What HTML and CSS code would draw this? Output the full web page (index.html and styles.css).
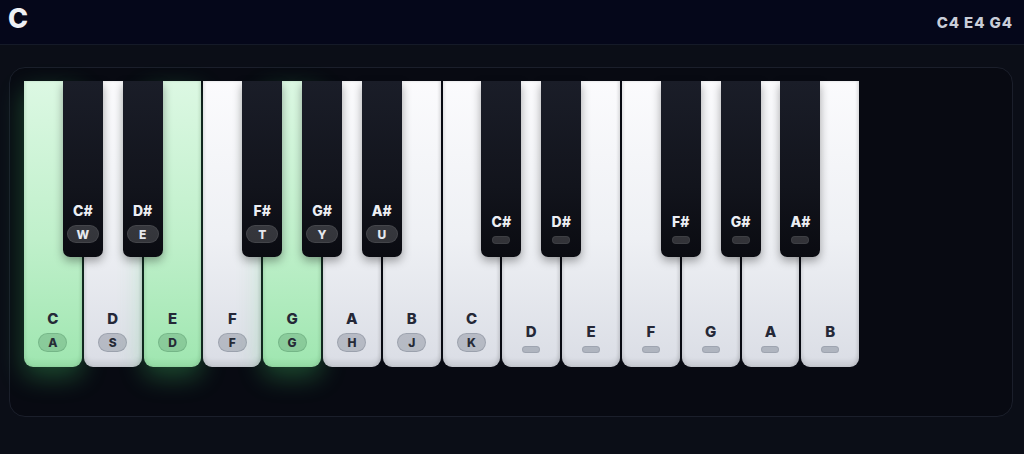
FILE: index.html
```html
<!DOCTYPE html>
<html lang="en">
<head>
<meta charset="utf-8">
<title>Piano</title>
<link rel="stylesheet" href="styles.css">
</head>
<body>
<header class="topbar">
  <h1 class="chord">C</h1>
  <div class="notes">C4 E4 G4</div>
</header>
<main class="stage">
  <section class="panel">
    <div class="keyboard">
      <div class="white active"><span class="name">C</span><span class="kbd">A</span>
        <div class="black"><span class="name">C#</span><span class="kbd">W</span></div></div>
      <div class="white"><span class="name">D</span><span class="kbd">S</span>
        <div class="black"><span class="name">D#</span><span class="kbd">E</span></div></div>
      <div class="white active"><span class="name">E</span><span class="kbd">D</span></div>
      <div class="white"><span class="name">F</span><span class="kbd">F</span>
        <div class="black"><span class="name">F#</span><span class="kbd">T</span></div></div>
      <div class="white active"><span class="name">G</span><span class="kbd">G</span>
        <div class="black"><span class="name">G#</span><span class="kbd">Y</span></div></div>
      <div class="white"><span class="name">A</span><span class="kbd">H</span>
        <div class="black"><span class="name">A#</span><span class="kbd">U</span></div></div>
      <div class="white"><span class="name">B</span><span class="kbd">J</span></div>
      <div class="white"><span class="name">C</span><span class="kbd">K</span>
        <div class="black"><span class="name">C#</span><span class="kbd empty"></span></div></div>
      <div class="white"><span class="name">D</span><span class="kbd empty"></span>
        <div class="black"><span class="name">D#</span><span class="kbd empty"></span></div></div>
      <div class="white"><span class="name">E</span><span class="kbd empty"></span></div>
      <div class="white"><span class="name">F</span><span class="kbd empty"></span>
        <div class="black"><span class="name">F#</span><span class="kbd empty"></span></div></div>
      <div class="white"><span class="name">G</span><span class="kbd empty"></span>
        <div class="black"><span class="name">G#</span><span class="kbd empty"></span></div></div>
      <div class="white"><span class="name">A</span><span class="kbd empty"></span>
        <div class="black"><span class="name">A#</span><span class="kbd empty"></span></div></div>
      <div class="white"><span class="name">B</span><span class="kbd empty"></span></div>
    </div>
  </section>
</main>
</body>
</html>
```

FILE: styles.css
```css
* { box-sizing: border-box; }
html, body { margin: 0; padding: 0; }
body {
  background: #0b0e17;
  font-family: Inter, "Noto Sans", "Liberation Sans", sans-serif;
  color: #e8eaf0;
  width: 1024px;
  height: 454px;
  overflow: hidden;
}
.topbar {
  height: 45px;
  background: #05071a;
  border-bottom: 1px solid #151a28;
  display: flex;
  align-items: baseline;
  justify-content: space-between;
  padding: 0 11px 0 8px;
}
.chord {
  margin: 0;
  font-size: 27px;
  font-weight: 800;
  line-height: 37px;
  color: #eef0f5;
}
.notes {
  font-size: 15px;
  font-weight: 800;
  color: #c9cdd8;
  letter-spacing: 0.9px;
}
.stage {
  padding: 22px 11px 0 9px;
}
.panel {
  height: 350px;
  background: #080a12;
  border: 1px solid #1b1f2b;
  border-radius: 16px;
  padding: 13px 14px;
}
.keyboard {
  display: flex;
  gap: 2px;
  height: 286px;
}
.white {
  position: relative;
  flex: 0 0 57.8px;
  height: 286px;
  border-radius: 0 0 9px 9px;
  background: linear-gradient(180deg, #fbfbfd 0%, #eef0f4 55%, #dadde5 100%);
  box-shadow: inset 2px 0 3px rgba(0,0,0,0.05), inset -2px 0 3px rgba(0,0,0,0.09), inset 0 -6px 4px rgba(0,0,0,0.07);
  display: flex;
  flex-direction: column;
  align-items: center;
  justify-content: flex-end;
  padding-bottom: 15px;
}
.white.active {
  background: linear-gradient(180deg, #dcf8e3 0%, #c0f0cb 55%, #9fe6b0 100%);
  box-shadow: inset 2px 0 3px rgba(0,40,10,0.05), inset -2px 0 3px rgba(0,40,10,0.08), inset 0 -6px 4px rgba(0,60,20,0.06), 0 10px 26px rgba(70,210,110,0.32);
}
.white > .name {
  font-size: 15px;
  font-weight: 800;
  color: #252837;
  line-height: 16px;
  margin-bottom: 6px;
}
.white > .kbd {
  display: flex;
  align-items: center;
  justify-content: center;
  width: 29px;
  height: 19px;
  border-radius: 10px;
  font-size: 12px;
  font-weight: 800;
  color: #262a36;
  background: rgba(40,50,70,0.22);
  border: 1px solid rgba(40,50,70,0.18);
}
.white.active > .kbd {
  background: rgba(30,90,50,0.2);
  border-color: rgba(30,90,50,0.18);
}
.white > .kbd.empty {
  width: 18px;
  height: 7px;
  border-radius: 4px;
  margin-bottom: -1px;
  background: rgba(40,50,70,0.25);
  border-color: rgba(40,50,70,0.12);
}
.black {
  position: absolute;
  top: 0;
  right: -21px;
  width: 40px;
  height: 176px;
  z-index: 2;
  border-radius: 0 0 7px 7px;
  background: linear-gradient(180deg, #1a1d28 0%, #12141c 60%, #0a0b11 100%);
  box-shadow: 0 4px 10px rgba(0,0,0,0.35);
  display: flex;
  flex-direction: column;
  align-items: center;
  justify-content: flex-end;
  padding-bottom: 14px;
}
.black > .name {
  font-size: 14px;
  font-weight: 800;
  color: #eceef3;
  line-height: 15px;
  margin-bottom: 7px;
}
.black > .kbd {
  display: flex;
  align-items: center;
  justify-content: center;
  width: 32px;
  height: 18px;
  border-radius: 9px;
  color: #e6e8ee;
  background: rgba(255,255,255,0.17);
  border: 1px solid rgba(255,255,255,0.08);
  font-size: 12px;
  font-weight: 800;
}
.black > .kbd.empty {
  width: 18px;
  height: 8px;
  border-radius: 4px;
  margin-bottom: -1px;
  background: rgba(255,255,255,0.16);
  border-color: rgba(255,255,255,0.06);
}
```
